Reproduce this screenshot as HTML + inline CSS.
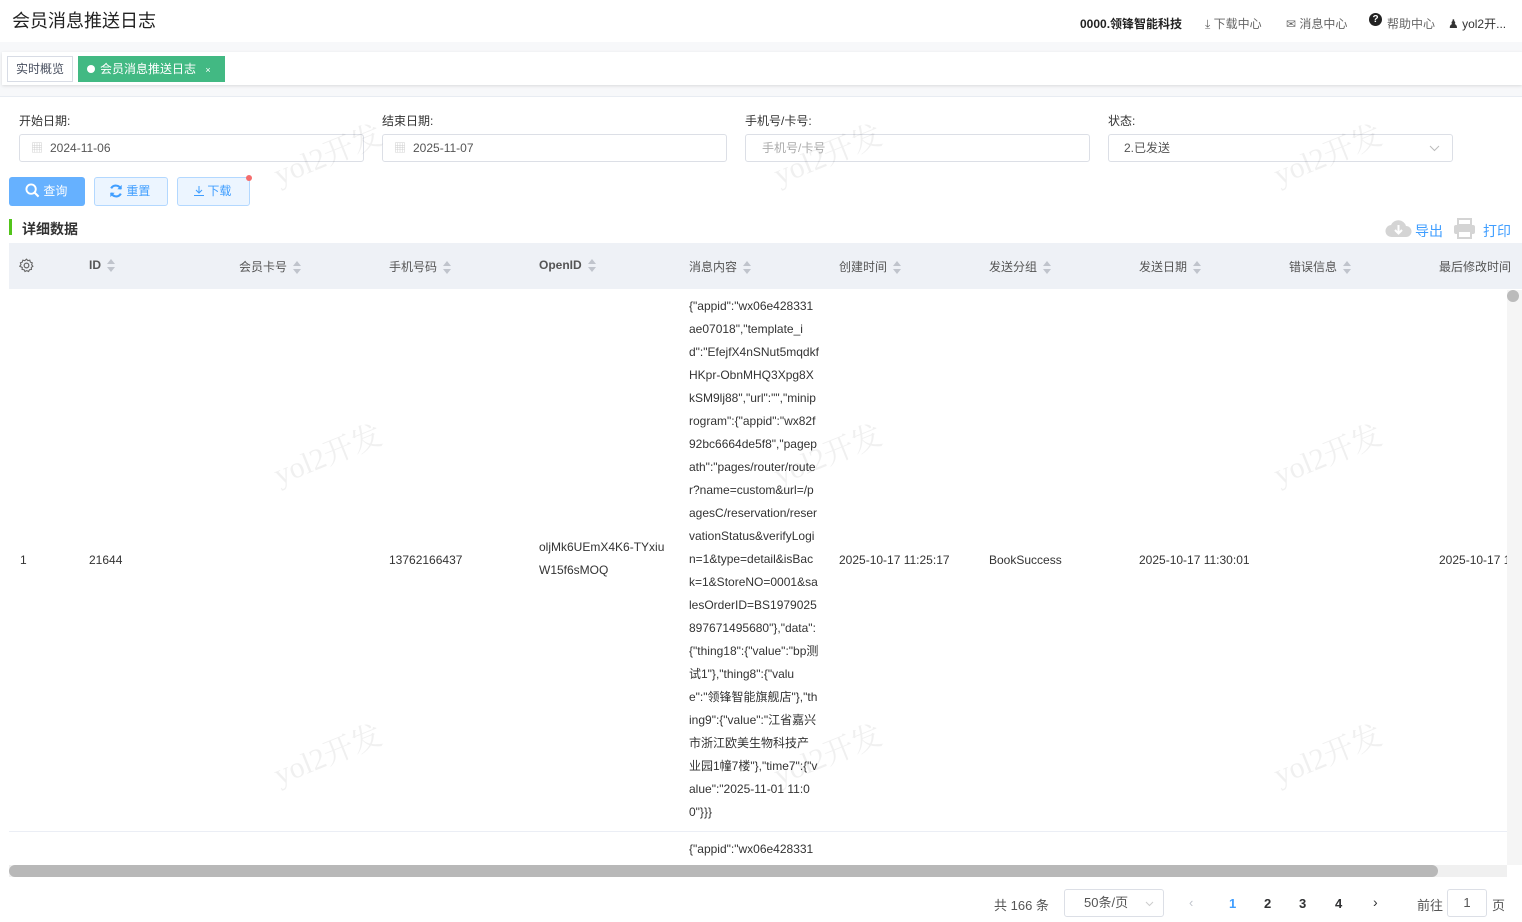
<!DOCTYPE html>
<html><head><meta charset="utf-8"><style>
*{box-sizing:border-box;margin:0;padding:0}
body{width:1522px;height:922px;overflow:hidden;background:#fff;font-family:"Liberation Sans","Noto Sans CJK SC",sans-serif;color:#333;position:relative;font-size:12px}
.a{position:absolute;white-space:nowrap}
.wm{position:absolute;color:rgba(0,0,0,0.06);font-size:30px;font-family:"Liberation Serif","Noto Serif CJK SC",serif;transform:rotate(-22deg);white-space:nowrap;z-index:50}
.inp{position:absolute;top:134px;height:28px;border:1px solid #dcdfe6;border-radius:3px;font-size:12px;color:#555;line-height:26px}
.lbl{position:absolute;top:112px;font-size:12px;color:#333}
.th{position:absolute;top:258px;font-size:12px;color:#555;white-space:nowrap}
.sort{display:inline-block;vertical-align:middle;margin-left:6px;width:9px;height:13px;position:relative}
.sort:before{content:"";position:absolute;left:0;top:0;border:4.5px solid transparent;border-bottom:5px solid #c0c4cc;border-top:0}
.sort:after{content:"";position:absolute;left:0;bottom:0;border:4.5px solid transparent;border-top:5px solid #c0c4cc;border-bottom:0}
.td{position:absolute;font-size:12px;color:#333;white-space:nowrap}
.msg div{height:23px;line-height:23px}
</style></head><body>
<div class="a" style="left:12px;top:7px;font-size:18px;color:#222">会员消息推送日志</div>
<div class="a" style="left:1080px;top:15px;font-size:12px;font-weight:bold;color:#222">0000.领锋智能科技</div>
<div class="a" style="left:1205px;top:15px;font-size:12px;color:#666">⤓ 下载中心</div>
<div class="a" style="left:1286px;top:15px;font-size:12px;color:#666">✉ 消息中心</div>
<div class="a" style="left:1369px;top:13px;width:13px;height:13px;border-radius:50%;background:#222;color:#fff;font-size:10px;text-align:center;line-height:13px;font-weight:bold">?</div>
<div class="a" style="left:1387px;top:15px;font-size:12px;color:#666">帮助中心</div>
<div class="a" style="left:1448px;top:15px;font-size:12px;color:#333">&#9823; yol2开...</div>
<div class="a" style="left:0;top:42px;width:1522px;height:55px;background:#f7f8fa"></div>
<div class="a" style="left:2px;top:52px;width:1520px;height:33px;background:#fff;box-shadow:0 1px 3px rgba(0,0,0,0.12)"></div>
<div class="a" style="left:7px;top:56px;width:66px;height:26px;border:1px solid #d8dce5;font-size:12px;line-height:24px;text-align:center;color:#495060">实时概览</div>
<div class="a" style="left:78px;top:56px;width:147px;height:26px;background:#42b983;color:#fff;font-size:12px;line-height:26px;padding-left:9px"><span style="display:inline-block;width:8px;height:8px;border-radius:50%;background:#fff;margin-right:5px"></span>会员消息推送日志 <span style="font-size:9px;margin-left:6px">×</span></div>
<div class="a" style="left:0;top:96px;width:1522px;height:1px;background:#e8ecf2"></div>

<div class="lbl" style="left:19px">开始日期:</div>
<div class="lbl" style="left:382px">结束日期:</div>
<div class="lbl" style="left:745px">手机号/卡号:</div>
<div class="lbl" style="left:1108px">状态:</div>
<div class="inp" style="left:19px;width:345px;padding-left:30px"><span style="position:absolute;left:11px;color:#ccc">▦</span>2024-11-06</div>
<div class="inp" style="left:382px;width:345px;padding-left:30px"><span style="position:absolute;left:11px;color:#ccc">▦</span>2025-11-07</div>
<div class="inp" style="left:745px;width:345px;padding-left:16px;color:#aaa">手机号/卡号</div>
<div class="inp" style="left:1108px;width:345px;padding-left:15px">2.已发送<svg style="position:absolute;right:12px;top:10px" width="11" height="7" viewBox="0 0 11 7"><path d="M1 1l4.5 4.5L10 1" fill="none" stroke="#bbb"/></svg></div>

<div class="a" style="left:9px;top:177px;width:76px;height:29px;background:#66b1ff;border-radius:3px;color:#fff;font-size:12px;line-height:29px;padding-left:16px"><svg width="15" height="15" viewBox="0 0 16 16" style="vertical-align:-3px"><circle cx="6.5" cy="6.5" r="5" fill="none" stroke="#fff" stroke-width="2"/><path d="M10 10l4.5 4.5" stroke="#fff" stroke-width="2.2"/></svg> 查询</div>
<div class="a" style="left:94px;top:177px;width:74px;height:29px;background:#ecf5ff;border:1px solid #b3d8ff;border-radius:3px;color:#409eff;font-size:12px;line-height:27px;padding-left:14px"><svg width="14" height="14" viewBox="0 0 16 16" style="vertical-align:-3px"><path d="M13.5 6A6 6 0 0 0 2.5 5M2.5 10a6 6 0 0 0 11 1" fill="none" stroke="#409eff" stroke-width="2.4"/><path d="M14.5 1v5h-5zM1.5 15v-5h5z" fill="#409eff"/></svg> 重置</div>
<div class="a" style="left:177px;top:177px;width:73px;height:29px;background:#ecf5ff;border:1px solid #b3d8ff;border-radius:3px;color:#409eff;font-size:12px;line-height:27px;padding-left:16px"><svg width="10" height="10" viewBox="0 0 10 10" style="vertical-align:-1px"><path d="M5 0v7M2 4l3 3 3-3M0 9.5h10" fill="none" stroke="#409eff"/></svg> 下载</div>
<div class="a" style="left:246px;top:175px;width:6px;height:6px;border-radius:50%;background:#f56c6c"></div>

<div class="a" style="left:9px;top:219px;width:3px;height:16px;background:#52c41a"></div>
<div class="a" style="left:22px;top:219px;font-size:14px;font-weight:bold;color:#333">详细数据</div>
<svg class="a" style="left:1385px;top:218px" width="27" height="20" viewBox="0 0 27 20"><path d="M7 19a6 6 0 0 1-1-12 8 8 0 0 1 15 1 5.5 5.5 0 0 1 0 11z" fill="#d4d4d4"/><path d="M13.5 7v8M10 12l3.5 3.5L17 12" fill="none" stroke="#fff" stroke-width="2"/></svg>
<div class="a" style="left:1415px;top:221px;font-size:14px;color:#409eff">导出</div>
<svg class="a" style="left:1453px;top:218px" width="23" height="21" viewBox="0 0 23 21"><rect x="5" y="1" width="13" height="6" fill="none" stroke="#d4d4d4" stroke-width="2"/><rect x="1" y="7" width="21" height="9" rx="2" fill="#d4d4d4"/><rect x="5" y="13" width="13" height="7" fill="#fff" stroke="#d4d4d4" stroke-width="2"/></svg>
<div class="a" style="left:1483px;top:221px;font-size:14px;color:#409eff">打印</div>

<div class="a" style="left:9px;top:243px;width:1513px;height:46px;background:#eef1f6"></div>
<svg class="a" style="left:19px;top:258px" width="15" height="15" viewBox="0 0 16 16"><circle cx="8" cy="8" r="2.5" fill="none" stroke="#666" stroke-width="1.3"/><path d="M8 1.2l1.4 1.6 2.1-.5.6 2.1 2 .8-.6 2 1.3 1.6-1.7 1.3.2 2.1-2.1.3-1 1.9-1.9-.9-1.9.9-1-1.9-2.1-.3.2-2.1L.8 8.8l1.3-1.6-.6-2 2-.8.6-2.1 2.1.5z" fill="none" stroke="#666" stroke-width="1.2"/></svg>
<div class="th" style="left:89px;font-weight:bold">ID<span class="sort"></span></div>
<div class="th" style="left:239px">会员卡号<span class="sort"></span></div>
<div class="th" style="left:389px">手机号码<span class="sort"></span></div>
<div class="th" style="left:539px;font-weight:bold">OpenID<span class="sort"></span></div>
<div class="th" style="left:689px">消息内容<span class="sort"></span></div>
<div class="th" style="left:839px">创建时间<span class="sort"></span></div>
<div class="th" style="left:989px">发送分组<span class="sort"></span></div>
<div class="th" style="left:1139px">发送日期<span class="sort"></span></div>
<div class="th" style="left:1289px">错误信息<span class="sort"></span></div>
<div class="th" style="left:1439px">最后修改时间</div>

<div class="td" style="left:20px;top:553px">1</div>
<div class="td" style="left:89px;top:553px">21644</div>
<div class="td" style="left:389px;top:553px">13762166437</div>
<div class="td" style="left:539px;top:536px;line-height:23px">oljMk6UEmX4K6-TYxiu<br>W15f6sMOQ</div>
<div class="td" style="left:839px;top:553px">2025-10-17 11:25:17</div>
<div class="td" style="left:989px;top:553px">BookSuccess</div>
<div class="td" style="left:1139px;top:553px">2025-10-17 11:30:01</div>
<div class="td" style="left:1439px;top:553px;width:68px;overflow:hidden">2025-10-17 11:30:01</div>
<div class="td msg" style="left:689px;top:295px">
<div>{"appid":"wx06e428331</div><div>ae07018","template_i</div><div>d":"EfejfX4nSNut5mqdkf</div><div>HKpr-ObnMHQ3Xpg8X</div><div>kSM9lj88","url":"","minip</div><div>rogram":{"appid":"wx82f</div><div>92bc6664de5f8","pagep</div><div>ath":"pages/router/route</div><div>r?name=custom&amp;url=/p</div><div>agesC/reservation/reser</div><div>vationStatus&amp;verifyLogi</div><div>n=1&amp;type=detail&amp;isBac</div><div>k=1&amp;StoreNO=0001&amp;sa</div><div>lesOrderID=BS1979025</div><div>897671495680"},"data":</div><div>{"thing18":{"value":"bp测</div><div>试1"},"thing8":{"valu</div><div>e":"领锋智能旗舰店"},"th</div><div>ing9":{"value":"江省嘉兴</div><div>市浙江欧美生物科技产</div><div>业园1幢7楼"},"time7":{"v</div><div>alue":"2025-11-01 11:0</div><div>0"}}}</div>
</div>
<div class="a" style="left:9px;top:831px;width:1498px;height:1px;background:#ebeef5"></div>
<div class="td" style="left:689px;top:842px">{"appid":"wx06e428331</div>
<div class="a" style="left:1507px;top:290px;width:15px;height:575px;background:#f5f5f5"></div>
<div class="a" style="left:1507px;top:290px;width:12px;height:12px;border-radius:6px;background:#bbb"></div>
<div class="a" style="left:9px;top:865px;width:1498px;height:12px;background:#f0f0f0"></div>
<div class="a" style="left:9px;top:865px;width:1429px;height:12px;border-radius:6px;background:#b8b8b8"></div>

<div class="a" style="left:994px;top:895px;font-size:13px;color:#555">共 166 条</div>
<div class="a" style="left:1064px;top:889px;width:100px;height:28px;border:1px solid #dcdfe6;border-radius:3px;font-size:13px;color:#555;line-height:26px;padding-left:19px">50条/页<svg style="position:absolute;right:9px;top:11px" width="9" height="6" viewBox="0 0 9 6"><path d="M1 1l3.5 3.5L8 1" fill="none" stroke="#ccc"/></svg></div>
<div class="a" style="left:1189px;top:895px;font-size:13px;color:#c0c4cc">‹</div>
<div class="a" style="left:1229px;top:896px;font-size:13px;color:#409eff;font-weight:bold">1</div>
<div class="a" style="left:1264px;top:896px;font-size:13px;color:#303133;font-weight:bold">2</div>
<div class="a" style="left:1299px;top:896px;font-size:13px;color:#303133;font-weight:bold">3</div>
<div class="a" style="left:1335px;top:896px;font-size:13px;color:#303133;font-weight:bold">4</div>
<div class="a" style="left:1373px;top:894px;font-size:14px;color:#303133">›</div>
<div class="a" style="left:1417px;top:895px;font-size:13px;color:#555">前往</div>
<div class="a" style="left:1447px;top:889px;width:40px;height:28px;border:1px solid #dcdfe6;border-radius:3px;font-size:13px;color:#555;line-height:26px;text-align:center">1</div>
<div class="a" style="left:1492px;top:895px;font-size:13px;color:#555">页</div>

<div class="wm" style="left:270px;top:130px">yol2开发</div>
<div class="wm" style="left:770px;top:130px">yol2开发</div>
<div class="wm" style="left:1270px;top:130px">yol2开发</div>
<div class="wm" style="left:270px;top:430px">yol2开发</div>
<div class="wm" style="left:770px;top:430px">yol2开发</div>
<div class="wm" style="left:1270px;top:430px">yol2开发</div>
<div class="wm" style="left:270px;top:730px">yol2开发</div>
<div class="wm" style="left:770px;top:730px">yol2开发</div>
<div class="wm" style="left:1270px;top:730px">yol2开发</div>
</body></html>
